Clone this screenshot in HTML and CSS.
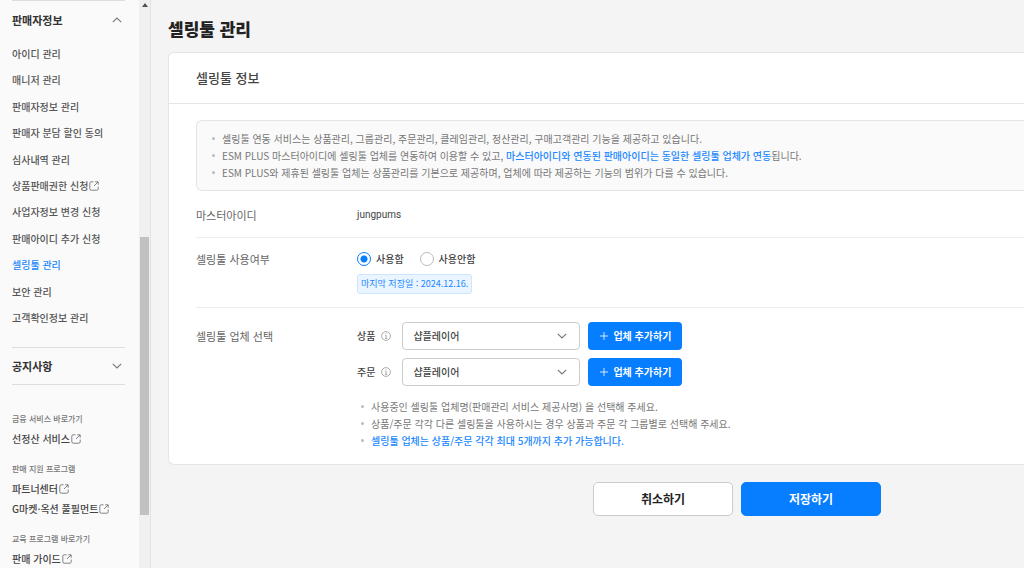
FILE: index.html
```html
<!DOCTYPE html>
<html lang="ko">
<head>
<meta charset="utf-8">
<title>셀링툴 관리</title>
<link rel="stylesheet" href="styles.css">
</head>
<body>
<svg class="symbols" width="0" height="0" aria-hidden="true">
  <symbol id="external" viewBox="0 0 10 10">
    <path d="M4.500 .8H2.200Q.8.800.8 2.200V7.800Q.8 9.200 2.200 9.200H7.800Q9.200 9.200 9.200 7.800V5.500M6.200.8H9.200V3.800M9 1L5 5" fill="none" stroke="currentColor" stroke-width=".8"/>
  </symbol>
  <symbol id="chevron" viewBox="0 0 10 6">
    <path d="M.8.8L5 5L9.200.8" fill="none" stroke="currentColor" stroke-width="1.100"/>
  </symbol>
  <symbol id="info" viewBox="0 0 10 10">
    <circle cx="5" cy="5" r="4.400" fill="none" stroke="currentColor" stroke-width=".7"/>
    <path d="M4.200 4.300H5.100V7.400M4 7.400H6.200M4.500 2.700H5.400" fill="none" stroke="currentColor" stroke-width=".7"/>
  </symbol>
  <symbol id="plus" viewBox="0 0 8 8">
    <path d="M4 0V8M0 4H8" fill="none" stroke="currentColor" stroke-width=".8"/>
  </symbol>
</svg>
<div class="layout">
  <nav class="sidebar">
    <button class="group" type="button" aria-expanded="true">판매자정보<svg class="chevron up"><use href="#chevron"/></svg></button>
    <ul class="menu">
      <li><a href="#">아이디 관리</a></li>
      <li><a href="#">매니저 관리</a></li>
      <li><a href="#">판매자정보 관리</a></li>
      <li><a href="#">판매자 분담 할인 동의</a></li>
      <li><a href="#">심사내역 관리</a></li>
      <li><a href="#">상품판매권한 신청<svg class="external"><use href="#external"/></svg></a></li>
      <li><a href="#">사업자정보 변경 신청</a></li>
      <li><a href="#">판매아이디 추가 신청</a></li>
      <li><a class="current" href="#" aria-current="page">셀링툴 관리</a></li>
      <li><a href="#">보안 관리</a></li>
      <li><a href="#">고객확인정보 관리</a></li>
    </ul>
    <button class="group closed" type="button" aria-expanded="false">공지사항<svg class="chevron"><use href="#chevron"/></svg></button>
    <div class="shortcuts">
      <section>
        <h2>금융 서비스 바로가기</h2>
        <a href="#">선정산 서비스<svg class="external"><use href="#external"/></svg></a>
      </section>
      <section>
        <h2>판매 지원 프로그램</h2>
        <a href="#">파트너센터<svg class="external"><use href="#external"/></svg></a>
        <a href="#">G마켓·옥션 풀필먼트<svg class="external"><use href="#external"/></svg></a>
      </section>
      <section>
        <h2>교육 프로그램 바로가기</h2>
        <a href="#">판매 가이드<svg class="external"><use href="#external"/></svg></a>
      </section>
    </div>
  </nav>
  <div class="scrollbar" aria-hidden="true">
    <svg class="arrow" viewBox="0 0 6 4"><path d="M0 4L3 0L6 4Z" fill="#505050"/></svg>
    <div class="thumb"></div>
  </div>
  <main class="content">
    <h1>셀링툴 관리</h1>
    <form>
      <div class="card">
        <h2 class="card-title">셀링툴 정보</h2>
        <div class="card-body">
          <ul class="notes boxed">
            <li>셀링툴 연동 서비스는 상품관리, 그룹관리, 주문관리, 클레임관리, 정산관리, 구매고객관리 기능을 제공하고 있습니다.</li>
            <li>ESM PLUS 마스터아이디에 셀링툴 업체를 연동하여 이용할 수 있고, <em>마스터아이디와 연동된 판매아이디는 동일한 셀링툴 업체가 연동</em>됩니다.</li>
            <li>ESM PLUS와 제휴된 셀링툴 업체는 상품관리를 기본으로 제공하며, 업체에 따라 제공하는 기능의 범위가 다를 수 있습니다.</li>
          </ul>
          <div class="row">
            <div class="label">마스터아이디</div>
            <div class="value master">jungpums</div>
          </div>
          <div class="row" role="radiogroup" aria-labelledby="use-label">
            <div class="label" id="use-label">셀링툴 사용여부</div>
            <div class="value">
              <div class="radios">
                <label><input type="radio" name="use" checked>사용함</label>
                <label><input type="radio" name="use">사용안함</label>
              </div>
              <span class="saved">마지막 저장일 : 2024.12.16.</span>
            </div>
          </div>
          <div class="row vendors">
            <div class="label">셀링툴 업체 선택</div>
            <div class="value">
              <div class="vendor">
                <label for="product">상품</label>
                <svg class="info"><use href="#info"/></svg>
                <div class="select"><select id="product"><option>샵플레이어</option></select><svg class="chevron"><use href="#chevron"/></svg></div>
                <button class="add" type="button"><svg class="plus"><use href="#plus"/></svg>업체 추가하기</button>
              </div>
              <div class="vendor">
                <label for="order">주문</label>
                <svg class="info"><use href="#info"/></svg>
                <div class="select"><select id="order"><option>샵플레이어</option></select><svg class="chevron"><use href="#chevron"/></svg></div>
                <button class="add" type="button"><svg class="plus"><use href="#plus"/></svg>업체 추가하기</button>
              </div>
              <ul class="notes">
                <li>사용중인 셀링툴 업체명(판매관리 서비스 제공사명) 을 선택해 주세요.</li>
                <li>상품/주문 각각 다른 셀링툴을 사용하시는 경우 상품과 주문 각 그룹별로 선택해 주세요.</li>
                <li class="highlight">셀링툴 업체는 상품/주문 각각 최대 5개까지 추가 가능합니다.</li>
              </ul>
            </div>
          </div>
        </div>
      </div>
      <div class="actions">
        <button class="cancel" type="button">취소하기</button>
        <button class="save" type="submit">저장하기</button>
      </div>
    </form>
  </main>
</div>
</body>
</html>
```
FILE: styles.css
```css
* { box-sizing: border-box; }
html, body { height: 100%; }
body {
  margin: 0;
  background: #f4f4f4;
  color: #444;
  font: 10px/16px "Noto Sans CJK KR", sans-serif;
}
h1, h2, ul { margin: 0; padding: 0; }
ul { list-style: none; }
a { color: inherit; text-decoration: none; }
button, select, input { font: inherit; color: inherit; margin: 0; }
button { cursor: pointer; }
em { font-style: normal; }
.symbols { display: none; }
.layout { display: flex; height: 100%; }

.sidebar {
  flex: 0 0 139px;
  padding: 0 14px 0 12px;
  background: #fafafa;
  overflow: hidden;
}
.group {
  display: flex;
  align-items: center;
  justify-content: space-between;
  width: 100%;
  height: 38px;
  padding: 0 3px 0 0;
  border: 0;
  border-top: 1px solid #ddd;
  background: none;
  color: #333;
  font-size: 11px;
  font-weight: 700;
}
.chevron { width: 10px; height: 6px; color: #777; }
.chevron.up { transform: rotate(180deg); }
.menu {
  display: flex;
  flex-direction: column;
  justify-content: space-between;
  min-height: 280px;
  margin: 8px 0 21px;
}
.menu a, .shortcuts a { display: flex; align-items: center; gap: 1px; white-space: nowrap; }
.menu a { font-weight: 500; color: #555; }
.menu .current { color: #2088ff; }
.closed { border-bottom: 1px solid #ddd; }
.external { width: 10px; height: 10px; color: #666; }
.shortcuts { display: grid; gap: 10px; padding-top: 24px; }
.shortcuts section { display: grid; }
.shortcuts h2 { font-size: 8px; font-weight: 500; line-height: 20px; color: #777; }
.shortcuts a { line-height: 20px; color: #444; font-weight: 500; }

.scrollbar {
  flex: 0 0 12px;
  display: grid;
  grid-template-rows: 237fr 278fr 53fr;
  justify-items: center;
  background: #f0f0f0;
  border-right: 1px solid #e2e2e2;
}
.arrow { width: 6px; height: 4px; margin-top: 3px; }
.thumb { width: 9px; background: #c1c1c1; }

.content { flex: 1; min-width: 0; padding: 18px 0 18px 17px; }
h1 { color: #222; font-size: 17px; font-weight: 900; line-height: 22px; }
.card {
  margin-top: 12px;
  border: 1px solid #e5e5e5;
  border-right: 0;
  border-radius: 6px 0 0 6px;
  background: #fff;
}
.card-title {
  padding: 15px 27px;
  border-bottom: 1px solid #e5e5e5;
  color: #444;
  font-size: 13px;
  font-weight: 500;
  line-height: 20px;
}
.card-body { padding: 16px 0 15px 27px; }
.notes { color: #777; line-height: 17px; }
.notes li { position: relative; padding-left: 10px; }
.notes li::before {
  content: "";
  position: absolute;
  left: 0;
  top: 7px;
  width: 3px;
  height: 3px;
  border-radius: 50%;
  background: #bbb;
}
.boxed {
  padding: 9px 15px;
  border: 1px solid #e5e5e5;
  border-right: 0;
  border-radius: 6px 0 0 6px;
  background: #fafafa;
}
.notes em, .notes .highlight { color: #2088ff; font-weight: 500; }
.row { display: flex; padding: 13px 0; border-bottom: 1px solid #eee; }
.boxed + .row { padding: 16px 0 14px; }
.row:last-child { border-bottom: 0; }
.label { flex: 0 0 161px; color: #666; font-size: 11px; }
.value { flex: 1; }
.master { font-family: Roboto, sans-serif; }
.radios { display: flex; gap: 16px; }
.radios label { display: flex; align-items: center; gap: 5px; color: #444; font-weight: 500; }
.radios input {
  appearance: none;
  width: 14px;
  height: 14px;
  border: 1px solid #bbb;
  border-radius: 50%;
  background: #fff;
}
.radios input:checked {
  border-color: #0a7cff;
  background: radial-gradient(circle, #0a7cff 3px, #fff 4px);
}
.saved {
  display: inline-block;
  margin-top: 7px;
  padding: 0 3px;
  border: 1px solid #cde5ff;
  border-radius: 3px;
  background: #ebf5ff;
  color: #2088ff;
  font-size: 9px;
  line-height: 18px;
  vertical-align: top;
}
.vendors { padding: 14px 0 0; }
.vendors .label { line-height: 28px; }
.vendor { display: flex; align-items: center; margin-bottom: 8px; color: #444; font-weight: 500; }
.info { width: 10px; height: 10px; margin: 0 11px 0 6px; color: #888; }
.select { display: grid; align-items: center; width: 178px; }
.select select, .select .chevron { grid-area: 1 / 1; }
.select select {
  appearance: none;
  width: 100%;
  height: 28px;
  padding: 0 10px;
  border: 1px solid #ccc;
  border-radius: 4px;
  background: #fff;
}
.select .chevron { justify-self: end; margin-right: 13px; pointer-events: none; }
.add {
  display: flex;
  align-items: center;
  gap: 5px;
  height: 28px;
  margin-left: 8px;
  padding: 0 11px 0 12px;
  border: 0;
  border-radius: 4px;
  background: #077dff;
  color: #fff;
  font-weight: 700;
}
.plus { width: 8px; height: 8px; }
.value .notes { padding: 4px 4px 0; }
.actions { display: flex; justify-content: flex-end; gap: 8px; margin-top: 17px; padding-right: 143px; }
.actions button {
  width: 140px;
  height: 34px;
  border: 1px solid #ccc;
  border-radius: 5px;
  background: #fff;
  color: #222;
  font-size: 12px;
  font-weight: 700;
}
.actions .save { border-color: #077dff; background: #077dff; color: #fff; }
```
